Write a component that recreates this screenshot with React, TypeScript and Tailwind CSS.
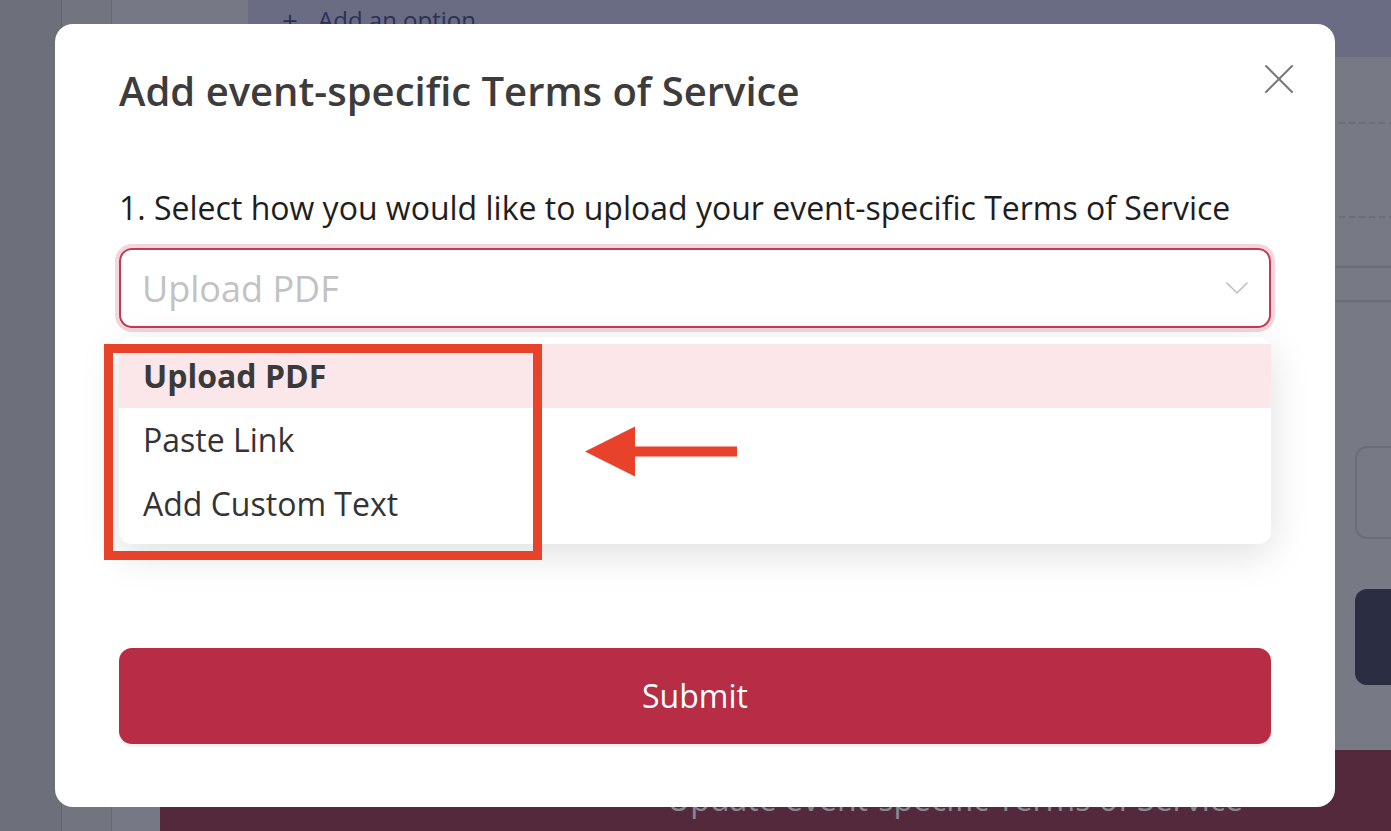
import { ChevronDown, X } from "lucide-react";

const options = ["Upload PDF", "Paste Link", "Add Custom Text"];

function Backdrop() {
  return (
    <div className="flex h-[831px] w-full overflow-hidden text-[#2d3057]">
      <div className="w-[62px] shrink-0 border-r border-[#62646f] bg-[#6d6f7b]" />
      <div className="w-[50px] shrink-0 border-r border-[#666873] bg-[#72747f]" />

      <div className="flex min-w-0 flex-1 flex-col">
        {/* top band */}
        <div className="flex h-[57px] shrink-0">
          <div className="w-[136px] shrink-0 bg-[#767885]" />
          <div className="flex flex-1 items-start gap-[20px] bg-[#696c83] pl-[34px] pt-[2px] text-[24px]">
            <span className="text-[28px] leading-[36px]">+</span>
            <span className="leading-[36px]">Add an option</span>
          </div>
        </div>

        {/* middle */}
        <div className="flex flex-1">
          <div className="w-[48px] shrink-0 bg-[#767885]" />
          <div className="flex flex-1 flex-col bg-[#777985]">
            <div className="h-[65px]" />
            <div className="h-[94px] border-t-2 border-dashed border-[#6b6d79]" />
            <div className="h-[50px] border-t-2 border-dashed border-[#6b6d79]" />
            <div className="h-[34px] border-t-2 border-[#6a6c78]" />
            <div className="h-[146px] border-t-2 border-[#6a6c78]" />
            <div className="ml-[1195px] h-[93px] w-[100px] rounded-[12px] border-2 border-[#6b6d79]" />
            <div className="mt-[50px] ml-[1195px] h-[96px] w-[100px] rounded-[12px] bg-[#2b2d42]" />
          </div>
        </div>

        {/* bottom bar */}
        <div className="flex h-[81px] shrink-0">
          <div className="w-[48px] shrink-0 bg-[#767885]" />
          <div className="flex-1 bg-[#55293c] pl-[507px] pt-[27px] text-[32px] leading-[44px] text-[#8b8894]">
            Update event-specific Terms of Service
          </div>
        </div>
      </div>
    </div>
  );
}

function TosModal() {
  return (
    <div className="absolute left-[55px] top-[24px] h-[783px] w-[1280px] rounded-[18px] bg-white px-[64px] pt-[40px]">
      <button className="absolute right-[30px] top-[29px] text-[#7a7a7a]">
        <X className="h-[52px] w-[52px]" strokeWidth={0.95} />
      </button>

      <h2 className="text-[40px] font-semibold leading-[54px] text-[#3c3c3c]">
        Add event-specific Terms of Service
      </h2>

      <p className="mt-[68px] text-[32px] leading-[44px] text-[#1e1e1e]">
        1. Select how you would like to upload your event-specific Terms of Service
      </p>

      <div className="relative mt-[18px]">
        <div className="flex h-[80px] items-center rounded-[13px] border-2 border-[#c23b55] pl-[21px] pr-[12px] shadow-[0_0_0_4px_#f3d6db]">
          <span className="flex-1 text-[36px] leading-[49px] text-[#c2c2c2]">Upload PDF</span>
          <ChevronDown className="h-[40px] w-[40px] text-[#bdbdbd]" strokeWidth={0.9} />
        </div>

        {/* open menu */}
        <div className="absolute left-0 right-0 top-[89px] z-10 rounded-[13px] bg-white pb-[8px] pt-[7px] shadow-[0_10px_40px_rgba(0,0,0,0.13)]">
          {options.map((o, i) => (
            <div
              key={o}
              className={
                i === 0
                  ? "bg-[#fbe7e9] px-[24px] text-[32px] font-bold leading-[64px] text-[#3a3a3a]"
                  : "px-[24px] text-[32px] leading-[64px] text-[#333333]"
              }
            >
              {o}
            </div>
          ))}
        </div>
      </div>

      <button className="mt-[320px] flex h-[96px] w-full items-center justify-center rounded-[13px] bg-[#b62d45] text-[32px] text-white shadow-[0_3px_0_rgba(0,0,0,0.05)]">
        Submit
      </button>
    </div>
  );
}

export default function App() {
  return (
    <div className="relative h-[831px] w-[1391px] overflow-hidden font-['Open_Sans',sans-serif]">
      <Backdrop />
      <TosModal />

      {/* annotation: box + arrow */}
      <div className="absolute left-[104px] top-[344px] z-20 h-[216px] w-[438px] border-[9px] border-[#e8432a]" />
      <svg className="absolute left-[580px] top-[420px] z-20" width="162" height="62" viewBox="0 0 162 62">
        <polygon points="5,31.5 55,6.5 55,56.5" fill="#e8432a" />
        <rect x="54" y="26.5" width="103" height="10" fill="#e8432a" />
      </svg>
    </div>
  );
}
